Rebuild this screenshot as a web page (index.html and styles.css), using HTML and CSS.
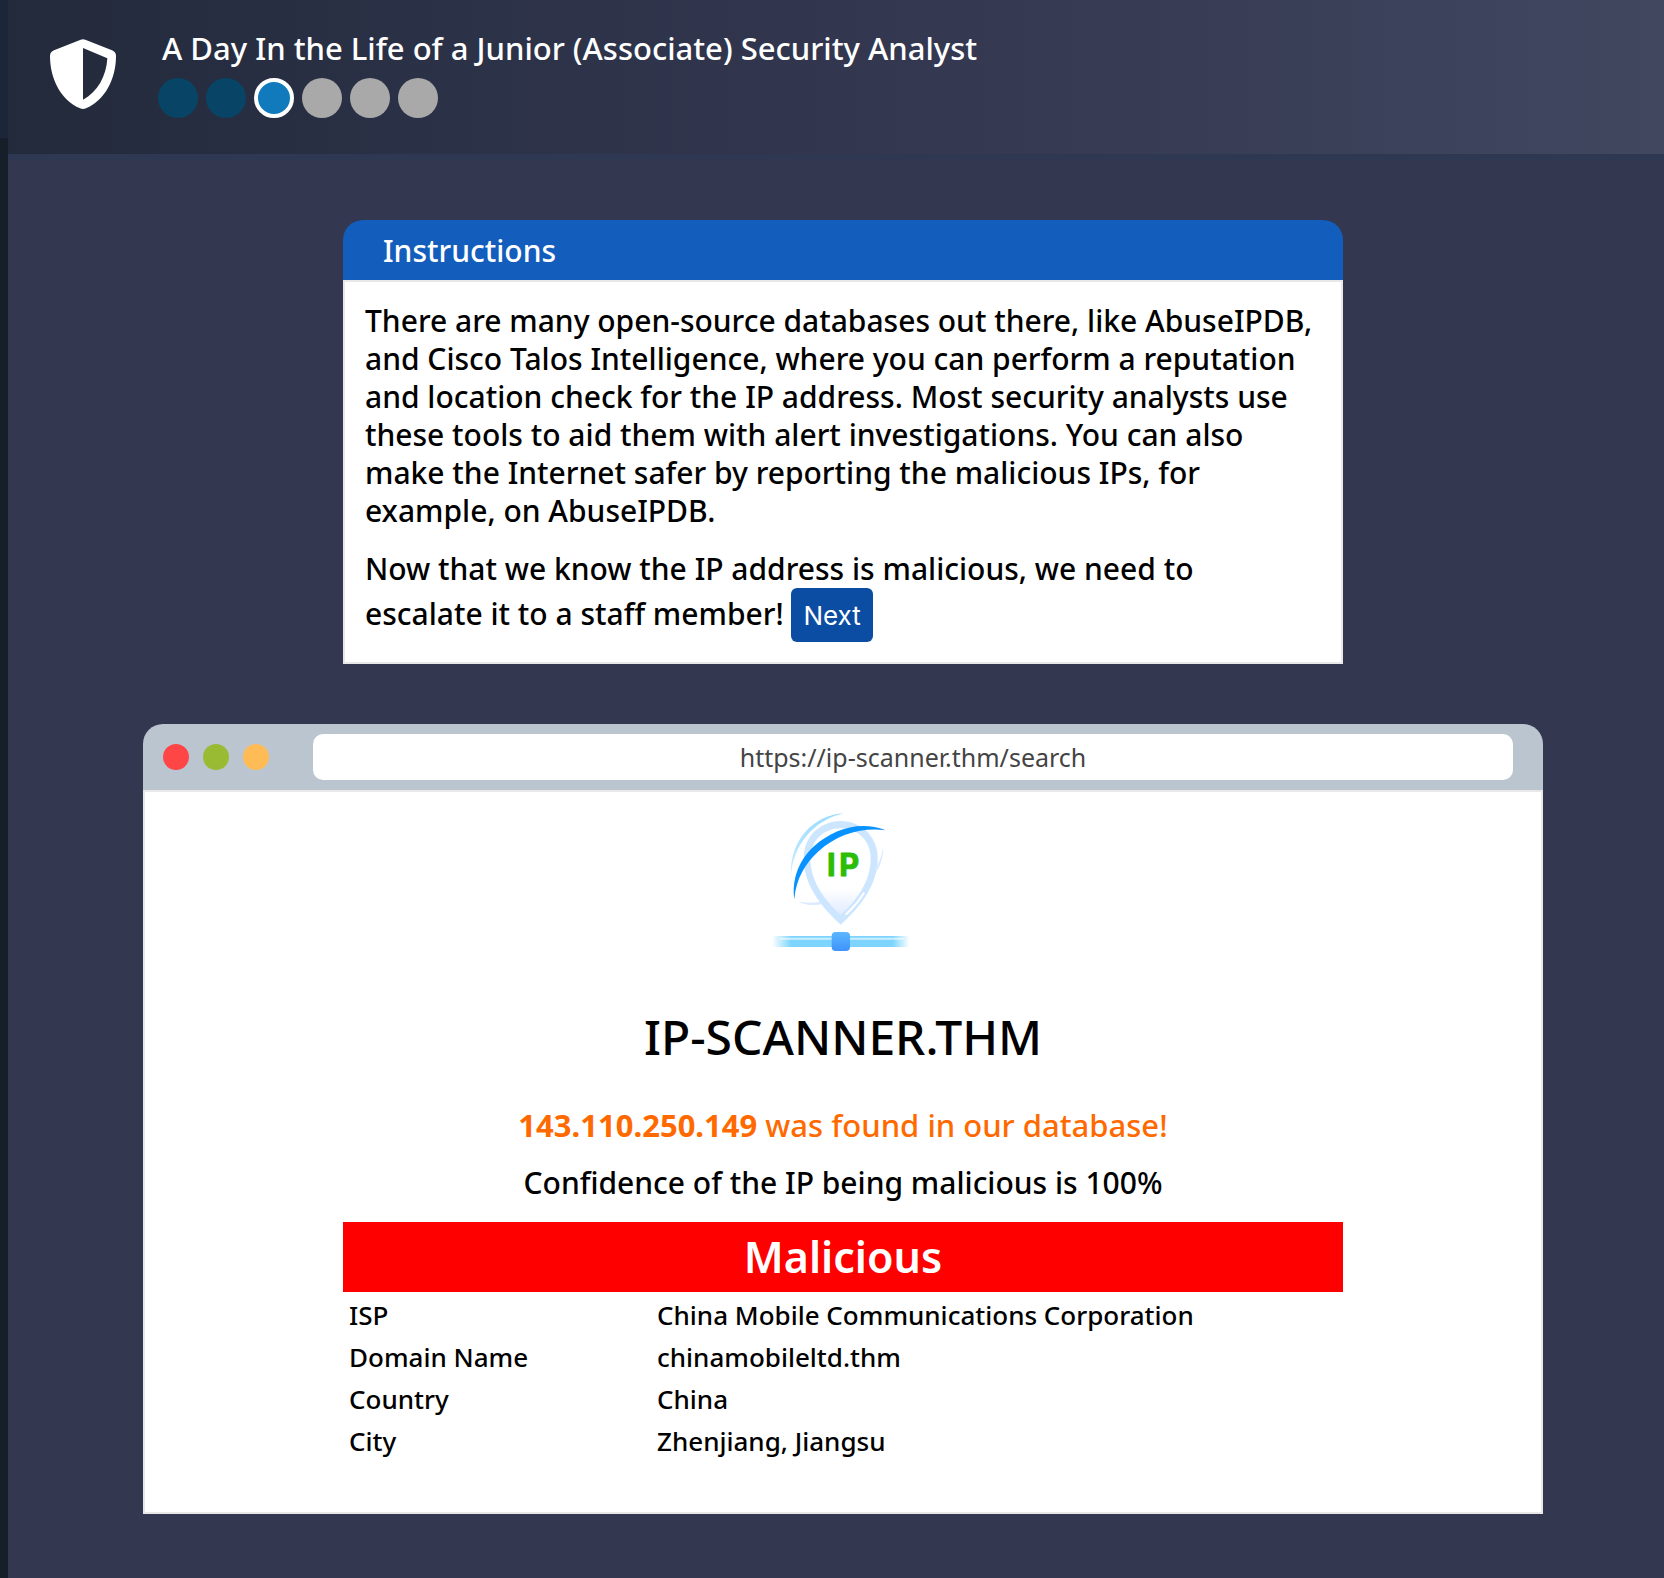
FILE: index.html
```html
<!DOCTYPE html>
<html lang="en">
<head>
<meta charset="utf-8">
<meta name="viewport" content="width=device-width, initial-scale=1">
<title>A Day In the Life of a Junior (Associate) Security Analyst</title>
<link rel="stylesheet" href="styles.css">
</head>
<body>
<div class="app">
  <div class="rail"></div>
  <div class="page">
    <header class="header">
      <svg class="shield" viewBox="0 0 198 210" aria-hidden="true">
        <path fill="#fff" fill-rule="evenodd" d="M92 2Q99-1 106 2L186 34Q198 39 198 51C198 120 165 184 108 208Q99 212 90 208C33 184 0 120 0 51Q0 39 12 34ZM99 27V182C142 160 169 112 172 58Z"/>
      </svg>
      <div class="heading">
        <h1 class="title">A Day In the Life of a Junior (Associate) Security Analyst</h1>
        <ol class="steps" aria-label="Progress">
          <li class="step step-done"></li>
          <li class="step step-done"></li>
          <li class="step step-current" aria-current="step"></li>
          <li class="step"></li>
          <li class="step"></li>
          <li class="step"></li>
        </ol>
      </div>
    </header>
    <main class="main">
      <section class="instructions">
        <h2 class="instructions-title">Instructions</h2>
        <div class="instructions-body">
          <p>There are many open-source databases out there, like AbuseIPDB, and Cisco Talos Intelligence, where you can perform a reputation and location check for the IP address. Most security analysts use these tools to aid them with alert investigations. You can also make the Internet safer by reporting the malicious IPs, for example, on AbuseIPDB.</p>
          <p>Now that we know the IP address is malicious, we need to <br>escalate it to a staff member! <button class="next" type="button">Next</button></p>
        </div>
      </section>
      <section class="browser">
        <div class="browser-bar">
          <div class="lights">
            <span class="light light-red"></span>
            <span class="light light-green"></span>
            <span class="light light-amber"></span>
          </div>
          <input class="url" type="text" aria-label="Address" value="https://ip-scanner.thm/search" readonly>
        </div>
        <div class="browser-body">
          <svg class="logo" viewBox="9 -12 480 522" role="img" aria-label="IP scanner">
            <defs>
              <linearGradient id="line" x1="0" x2="1" y1="0" y2="0">
                <stop offset="0" stop-color="#7dd5ff" stop-opacity="0"/>
                <stop offset=".14" stop-color="#7dd5ff"/>
                <stop offset=".88" stop-color="#7dd5ff"/>
                <stop offset="1" stop-color="#7dd5ff" stop-opacity="0"/>
              </linearGradient>
              <linearGradient id="node" x1="0" x2="0" y1="0" y2="1">
                <stop offset="0" stop-color="#5cb6ff"/>
                <stop offset="1" stop-color="#3f93fb"/>
              </linearGradient>
              <linearGradient id="pin" x1="0" x2="0" y1="0" y2="1">
                <stop offset=".7" stop-color="#fff"/>
                <stop offset="1" stop-color="#dfebff"/>
              </linearGradient>
              <linearGradient id="arc" x1="0" x2="0" y1="0" y2="1">
                <stop offset="0" stop-color="#9adcff"/>
                <stop offset="1" stop-color="#cdeeff"/>
              </linearGradient>
            </defs>
            <path fill="#cde6ff" d="M242 75C302 75 353 120 353 186C353 266 302 332 242 386C182 332 131 266 131 186C131 120 182 75 242 75Z"/>
            <path fill="url(#pin)" d="M242 97C292 97 332 134 332 188C332 252 294 309 242 357C190 309 151 252 151 188C151 134 192 97 242 97Z"/>
            <path fill="none" stroke="#fff" stroke-width="6" stroke-linecap="round" d="M311 292Q292 324 259 354"/>
            <path fill="url(#arc)" d="M251 52C163 57 88 130 93 240C99 145 163 72 251 52Z"/>
            <path fill="#dbeaff" d="M370 148C371 181 362 207 348 230L345 219C358 200 367 175 370 148ZM112 316C135 322 158 321 181 317L188 324C158 330 131 327 112 316Z"/>
            <path fill="#0792ff" d="M377 103C300 73 220 99 162 151C122 187 94 245 103 310C108 247 137 201 174 167C235 112 309 94 377 103Z"/>
            <text class="logo-text" x="201 238" y="239">IP</text>
            <rect x="36" y="420" width="412" height="33" fill="url(#line)"/>
            <path stroke="#fff" stroke-opacity=".6" stroke-width="6" d="M60 428H430"/>
            <rect x="215" y="408" width="55" height="57" rx="12" fill="url(#node)"/>
          </svg>
          <h2 class="site-name">IP-SCANNER.THM</h2>
          <p class="found"><strong>143.110.250.149</strong> was found in our database!</p>
          <p class="confidence">Confidence of the IP being malicious is 100%</p>
          <div class="report">
            <div class="verdict">Malicious</div>
            <table class="details">
              <tr><th scope="row">ISP</th><td>China Mobile Communications Corporation</td></tr>
              <tr><th scope="row">Domain Name</th><td>chinamobileltd.thm</td></tr>
              <tr><th scope="row">Country</th><td>China</td></tr>
              <tr><th scope="row">City</th><td>Zhenjiang, Jiangsu</td></tr>
            </table>
          </div>
        </div>
      </section>
    </main>
  </div>
</div>
</body>
</html>
```
FILE: styles.css
```css
* { box-sizing: border-box; }

body {
  margin: 0;
  background: #333750;
  color: #000;
  font-family: "Noto Sans", "Open Sans", sans-serif;
  font-size: 30px;
  font-weight: 500;
  line-height: 38px;
}

h1, h2, p, ol { margin: 0; padding: 0; }

.app { display: flex; min-height: 100vh; }

.rail {
  flex: 0 0 8px;
  background: linear-gradient(#1b2638 138px, #161e2a 138px);
}

.page { flex: 1; min-width: 0; }

.header {
  display: flex;
  align-items: flex-start;
  gap: 42px;
  height: 160px;
  padding: 30px 42px 0;
  border-bottom: 6px solid #2f3853;
  background: linear-gradient(90deg, #232a3b, #2c3248 30%, #353952 60%, #40475f);
}

.shield { width: 66px; height: 70px; margin-top: 9px; }

.title {
  padding-left: 4px;
  color: #fff;
  font-size: 31px;
  font-weight: 500;
  line-height: 36px;
}

.steps { display: flex; gap: 8px; margin-top: 12px; list-style: none; }

.step { width: 40px; height: 40px; border-radius: 50%; background: #a9a9a9; }
.step-done { background: #084465; }
.step-current { border: 4px solid #fff; background: #107abc; }

.main {
  display: flex;
  flex-direction: column;
  align-items: center;
  gap: 60px;
  padding: 60px 0 60px 14px;
}

.instructions { width: 100%; max-width: 1000px; }

.instructions-title {
  padding: 12px 40px 10px;
  border-radius: 20px 20px 0 0;
  background: #135dbc;
  color: #fff;
  font-size: 30px;
  font-weight: 500;
}

.instructions-body {
  display: grid;
  gap: 20px;
  padding: 20px;
  border: 2px solid #e8e8e8;
  background: #fff;
}

.next {
  height: 54px;
  padding: 0 12px;
  border: 0;
  border-radius: 6px;
  background: #0b4da2;
  color: #fff;
  font-family: Inter, sans-serif;
  font-size: 26px;
  vertical-align: baseline;
}

.browser { width: 100%; max-width: 1400px; }

.browser-bar {
  display: flex;
  align-items: center;
  gap: 44px;
  height: 66px;
  padding: 0 30px 0 20px;
  border-radius: 20px 20px 0 0;
  background: #bbc5cf;
}

.lights { display: flex; gap: 14px; }
.light { width: 26px; height: 26px; border-radius: 50%; }
.light-red { background: #ff4646; }
.light-green { background: #99bb33; }
.light-amber { background: #ffbb55; }

.url {
  flex: 1;
  min-width: 0;
  height: 46px;
  padding: 0;
  border: 0;
  border-radius: 10px;
  background: #fff;
  color: #444;
  font: 25px "Noto Sans", sans-serif;
  text-align: center;
}

.browser-body {
  display: flex;
  flex-direction: column;
  align-items: center;
  padding-bottom: 50px;
  border: 2px solid #e8e8e8;
  background: #fff;
  text-align: center;
}

.logo { width: 160px; height: 174px; }
.logo-text {
  fill: #2cbd08;
  stroke: #2cbd08;
  stroke-width: 3px;
  stroke-linejoin: round;
  font: 700 92px Inter, sans-serif;
}

.site-name {
  margin-top: 41px;
  font-size: 48px;
  font-weight: 500;
  line-height: 60px;
}

.found { margin-top: 39px; color: #ff6a00; font-size: 31px; }
.confidence { margin-top: 20px; }

.report { width: 100%; max-width: 1000px; margin-top: 20px; }

.verdict {
  background: #f00;
  color: #fff;
  font-size: 43px;
  font-weight: 600;
  line-height: 70px;
}

.details {
  width: 100%;
  margin-top: 2px;
  border-spacing: 0;
  font-size: 26px;
  text-align: left;
}

.details th, .details td { padding: 2px 6px; font-weight: 500; }
.details th { width: 308px; }
```
